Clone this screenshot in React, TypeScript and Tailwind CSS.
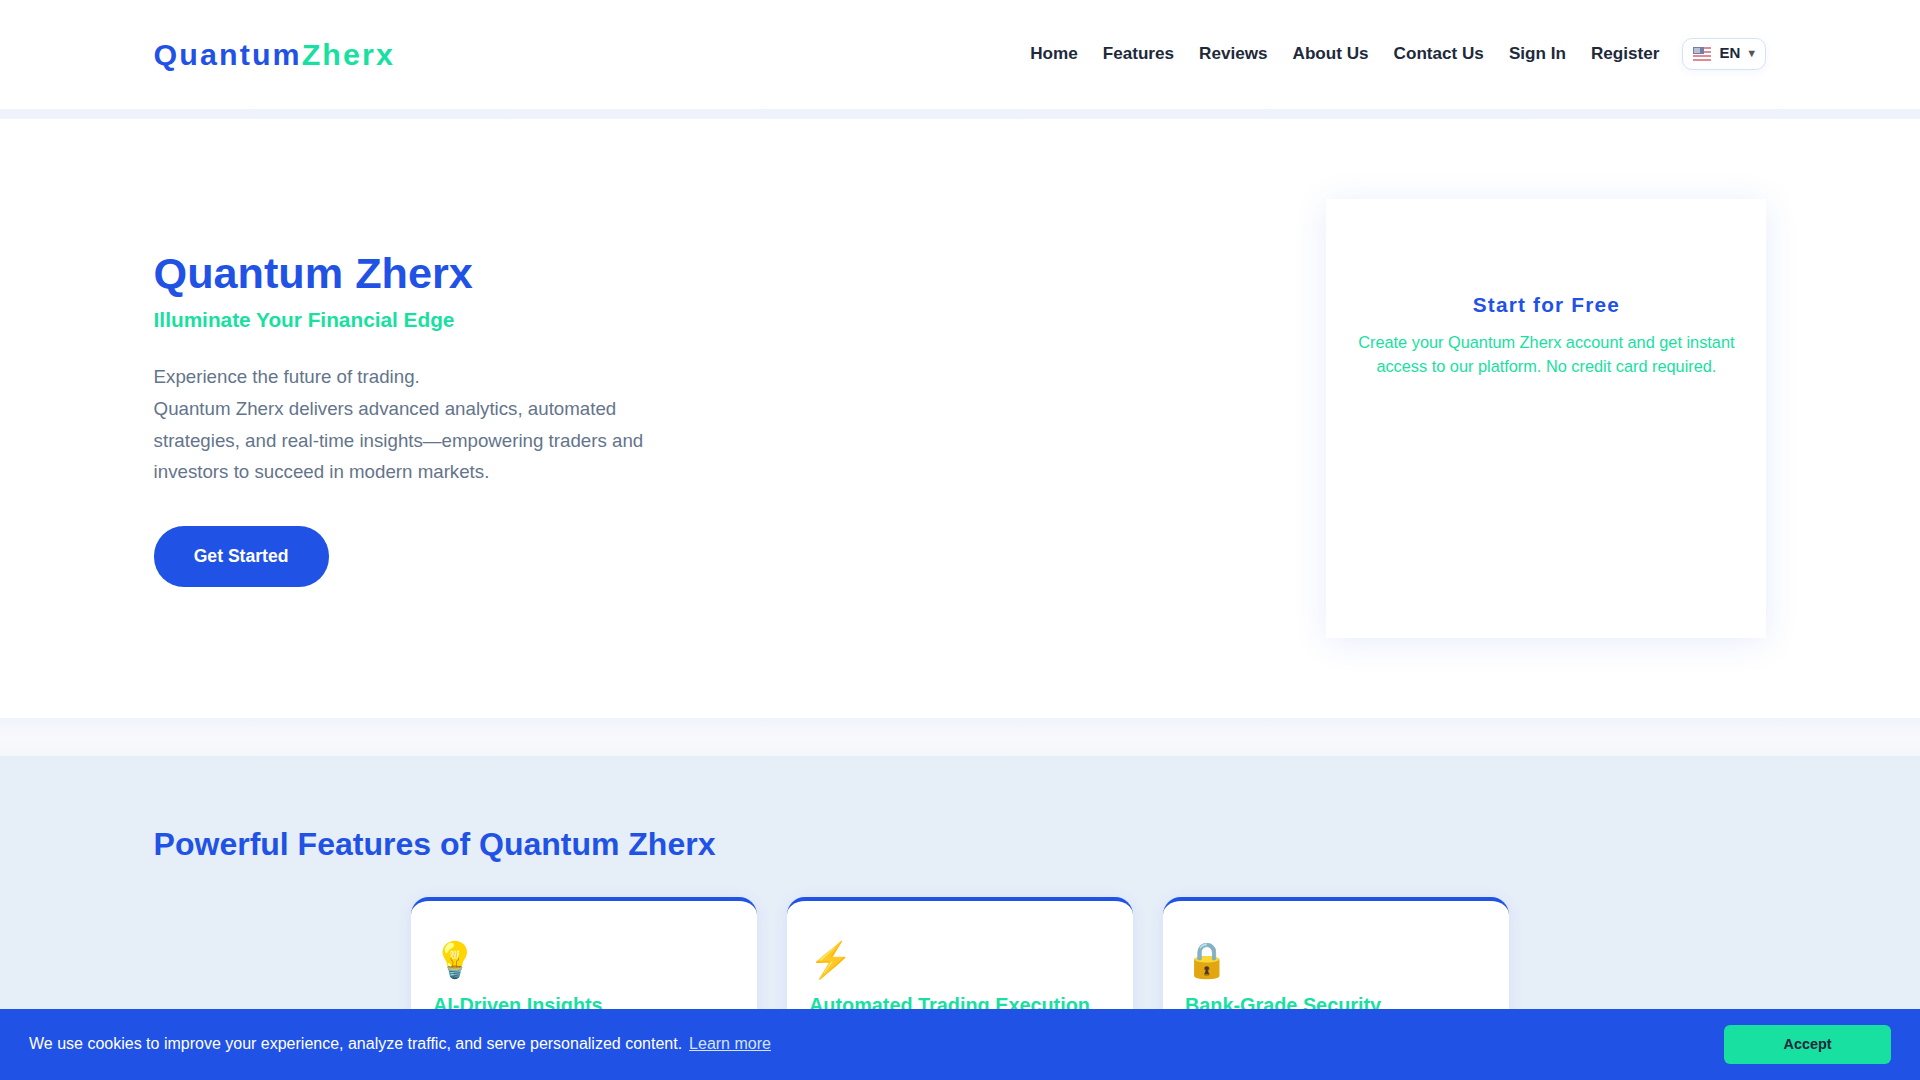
import React from 'react';

const navLinks = ['Home', 'Features', 'Reviews', 'About Us', 'Contact Us', 'Sign In', 'Register'];

const features = [
    { icon: '💡', title: 'AI-Driven Insights', text: 'Make smarter decisions with real-time analytics powered by machine learning.' },
    { icon: '⚡', title: 'Automated Trading Execution', text: 'Execute strategies around the clock with fast and reliable automation.' },
    { icon: '🔒', title: 'Bank-Grade Security', text: 'Your funds and data stay protected with advanced encryption.' },
];

const FlagUS = () => (
    <svg width="18" height="14" viewBox="0 0 18 14" className="opacity-60">
        <rect width="18" height="14" fill="#fff" />
        <rect y="0" width="18" height="2" fill="#c8404f" />
        <rect y="4" width="18" height="2" fill="#c8404f" />
        <rect y="8" width="18" height="2" fill="#c8404f" />
        <rect y="12" width="18" height="2" fill="#c8404f" />
        <rect width="11" height="7" fill="#1c2a6b" />
        <path d="M2 1v5M4 1v5M6 1v5" stroke="#fff" strokeWidth="1" />
    </svg>
);

const App: React.FC = () => {
    return (
        <div className="min-h-screen w-full bg-[#f7f9fc] font-['Liberation_Sans',Arial,sans-serif]">
            {/* Header */}
            <header className="h-[109px] bg-white flex items-center">
                <div className="w-[84%] mx-auto flex items-center justify-between -mt-[2px]">
                    <div className="mt-[2px] text-[30.4px] font-bold tracking-[2.1px] leading-none text-[#1f52e5]">
                        Quantum<span className="text-[#18e0a1]">Zherx</span>
                    </div>
                    <nav className="flex items-center gap-[25px]">
                        {navLinks.map((link) => (
                            <a key={link} className="text-[17.12px] font-bold text-[#1e293b]">{link}</a>
                        ))}
                        <button className="ml-[-2px] w-[84px] h-[32px] pl-[10px] flex items-center bg-white border border-[#d5e3f7] rounded-[10px] shadow-[0_2px_8px_rgba(31,82,229,0.05)]">
                            <FlagUS />
                            <span className="ml-[8px] text-[15px] font-bold text-[#1e293b]">EN</span>
                            <span className="ml-[6px] text-[11px] text-[#555]">▼</span>
                        </button>
                    </nav>
                </div>
            </header>
            <div className="h-[10px] bg-gradient-to-b from-[#eef2fb] to-[#f0f3fb]"></div>

            {/* Hero */}
            <section className="h-[599px] bg-white flex items-center">
                <div className="w-[84%] mx-auto flex items-center justify-between">
                    <div className="w-[520px] mb-[3px]">
                        <h1 className="text-[43.2px] font-bold leading-[52px] text-[#1f52e5]">Quantum Zherx</h1>
                        <h2 className="mt-[7px] text-[20.8px] font-bold leading-[28px] text-[#18e0a1]">Illuminate Your Financial Edge</h2>
                        <p className="mt-[27px] text-[18.72px] leading-[31.8px] text-[#64748b]">
                            Experience the future of trading.<br />
                            Quantum Zherx delivers advanced analytics, automated strategies, and real-time insights—empowering traders and investors to succeed in modern markets.
                        </p>
                        <button className="mt-[38px] w-[175px] h-[61px] rounded-[30px] bg-[#1f52e5] text-white text-[17.6px] font-bold">
                            Get Started
                        </button>
                    </div>
                    <div className="w-[440px] h-[439px] bg-white pt-[92px] px-[24px] text-center shadow-[0_4px_32px_rgba(31,82,229,0.1)]">
                        <h3 className="text-[20.8px] font-bold tracking-[1.2px] leading-[28px] text-[#1f52e5]">Start for Free</h3>
                        <p className="mt-[11px] text-[16.32px] leading-[24px] text-[#18e0a1]">
                            Create your Quantum Zherx account and get instant access to our platform. No credit card required.
                        </p>
                    </div>
                </div>
            </section>
            <div className="h-[38px] bg-gradient-to-b from-[#f0f3fb] via-[#f8f9fc] to-[#f4f7fb]"></div>

            {/* Features */}
            <section className="bg-[#e6eef8] pt-[68px] pb-[60px]">
                <div className="w-[84%] mx-auto">
                    <h2 className="text-[32px] font-bold leading-[40px] text-[#1f52e5]">Powerful Features of Quantum Zherx</h2>
                    <div className="mt-[33px] flex justify-center gap-[30px]">
                        {features.map((feature) => (
                            <div key={feature.title} className="w-[346px] h-[300px] bg-white border-t-4 border-[#1f52e5] rounded-[18px] px-[22px] pt-[37px] shadow-[0_2px_16px_rgba(31,82,229,0.08)]">
                                <div className="text-[35px] leading-[44px]">{feature.icon}</div>
                                <h3 className="mt-[10px] text-[19.84px] font-bold leading-[26px] text-[#18e0a1]">{feature.title}</h3>
                                <p className="mt-[10px] text-[16px] leading-[24px] text-[#64748b]">{feature.text}</p>
                            </div>
                        ))}
                    </div>
                </div>
            </section>

            {/* Cookie bar */}
            <div className="fixed bottom-0 inset-x-0 h-[71px] bg-[#1f52e5] flex items-center justify-between pl-[29px] pr-[29px]">
                <p className="text-[16px] text-white -mt-[2px]">
                    We use cookies to improve your experience, analyze traffic, and serve personalized content.
                    <a className="ml-[7px] underline text-[#d5e3f7]">Learn more</a>
                </p>
                <button className="w-[167px] h-[39px] rounded-[6px] bg-[#18e0a1] text-[14.4px] font-bold text-[#1e293b]">
                    Accept
                </button>
            </div>
        </div>
    );
};

export default App;
